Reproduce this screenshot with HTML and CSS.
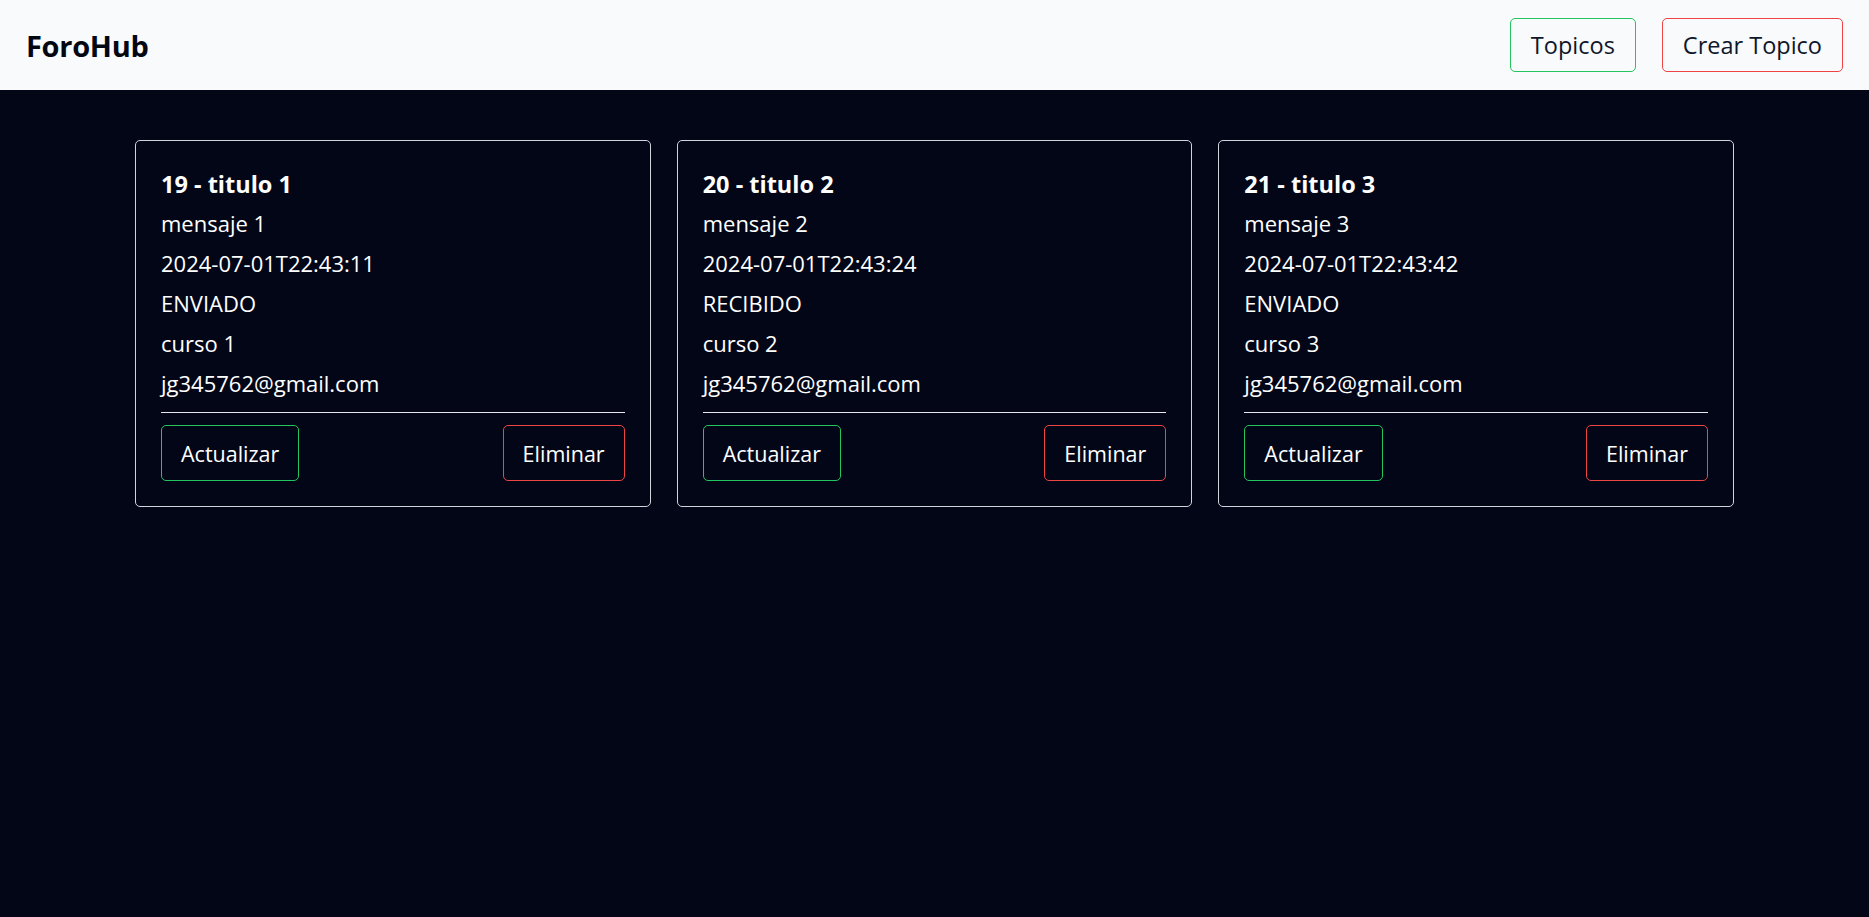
FILE: index.html
```html
<!DOCTYPE html>
<html lang="es">
<head>
<meta charset="utf-8">
<title>ForoHub</title>
<link rel="stylesheet" href="styles.css">
</head>
<body>
<header class="topbar">
  <div class="logo">ForoHub</div>
  <nav class="nav">
    <button class="btn btn-green btn-nav">Topicos</button>
    <button class="btn btn-red btn-nav">Crear Topico</button>
  </nav>
</header>
<main class="cards">
  <article class="card">
    <h2 class="card-title">19 - titulo 1</h2>
    <p class="card-line">mensaje 1</p>
    <p class="card-line">2024-07-01T22:43:11</p>
    <p class="card-line">ENVIADO</p>
    <p class="card-line">curso 1</p>
    <p class="card-line">jg345762@gmail.com</p>
    <hr class="card-divider">
    <div class="card-actions">
      <button class="btn btn-green btn-card">Actualizar</button>
      <button class="btn btn-red btn-card">Eliminar</button>
    </div>
  </article>
  <article class="card">
    <h2 class="card-title">20 - titulo 2</h2>
    <p class="card-line">mensaje 2</p>
    <p class="card-line">2024-07-01T22:43:24</p>
    <p class="card-line">RECIBIDO</p>
    <p class="card-line">curso 2</p>
    <p class="card-line">jg345762@gmail.com</p>
    <hr class="card-divider">
    <div class="card-actions">
      <button class="btn btn-green btn-card">Actualizar</button>
      <button class="btn btn-red btn-card">Eliminar</button>
    </div>
  </article>
  <article class="card">
    <h2 class="card-title">21 - titulo 3</h2>
    <p class="card-line">mensaje 3</p>
    <p class="card-line">2024-07-01T22:43:42</p>
    <p class="card-line">ENVIADO</p>
    <p class="card-line">curso 3</p>
    <p class="card-line">jg345762@gmail.com</p>
    <hr class="card-divider">
    <div class="card-actions">
      <button class="btn btn-green btn-card">Actualizar</button>
      <button class="btn btn-red btn-card">Eliminar</button>
    </div>
  </article>
</main>
</body>
</html>
```

FILE: styles.css
```css
* { box-sizing: border-box; }

html, body {
  margin: 0;
  padding: 0;
  background: #020617;
  font-family: "Open Sans", "Noto Sans", sans-serif;
}

body { min-height: 917px; }

.topbar {
  height: 90px;
  background: #f8fafc;
  display: flex;
  align-items: center;
  justify-content: space-between;
  padding: 0 26px;
}

.logo {
  font-size: 29px;
  font-weight: 700;
  color: #030712;
  letter-spacing: -0.3px;
}

.nav {
  display: flex;
  gap: 26px;
}

.btn {
  font-family: inherit;
  background: transparent;
  border: 1px solid;
  border-radius: 5px;
  cursor: pointer;
  display: flex;
  align-items: center;
  justify-content: center;
}

.btn-green { border-color: #22c55e; }
.btn-red { border-color: #ef4444; }

.btn-nav {
  height: 54px;
  padding: 0 20px;
  font-size: 23.5px;
  color: #0f172a;
}

.cards {
  display: grid;
  grid-template-columns: repeat(3, 1fr);
  column-gap: 26px;
  padding: 50px 135px 0 135px;
  align-items: start;
}

.card {
  border: 1px solid #d1d5db;
  border-radius: 5px;
  padding: 25px 25px 25px 25px;
  color: #ffffff;
}

.card-title {
  margin: 0;
  font-size: 23.5px;
  line-height: 37px;
  font-weight: 700;
}

.card-line {
  margin: 0;
  font-size: 22px;
  line-height: 40px;
}

.card-divider {
  margin: 9px 0 0 0;
  border: 0;
  border-top: 1px solid #e5e7eb;
}

.card-actions {
  display: flex;
  justify-content: space-between;
  margin-top: 12px;
}

.btn-card {
  height: 56px;
  padding: 0 19px;
  font-size: 21.5px;
  color: #ffffff;
}
```
